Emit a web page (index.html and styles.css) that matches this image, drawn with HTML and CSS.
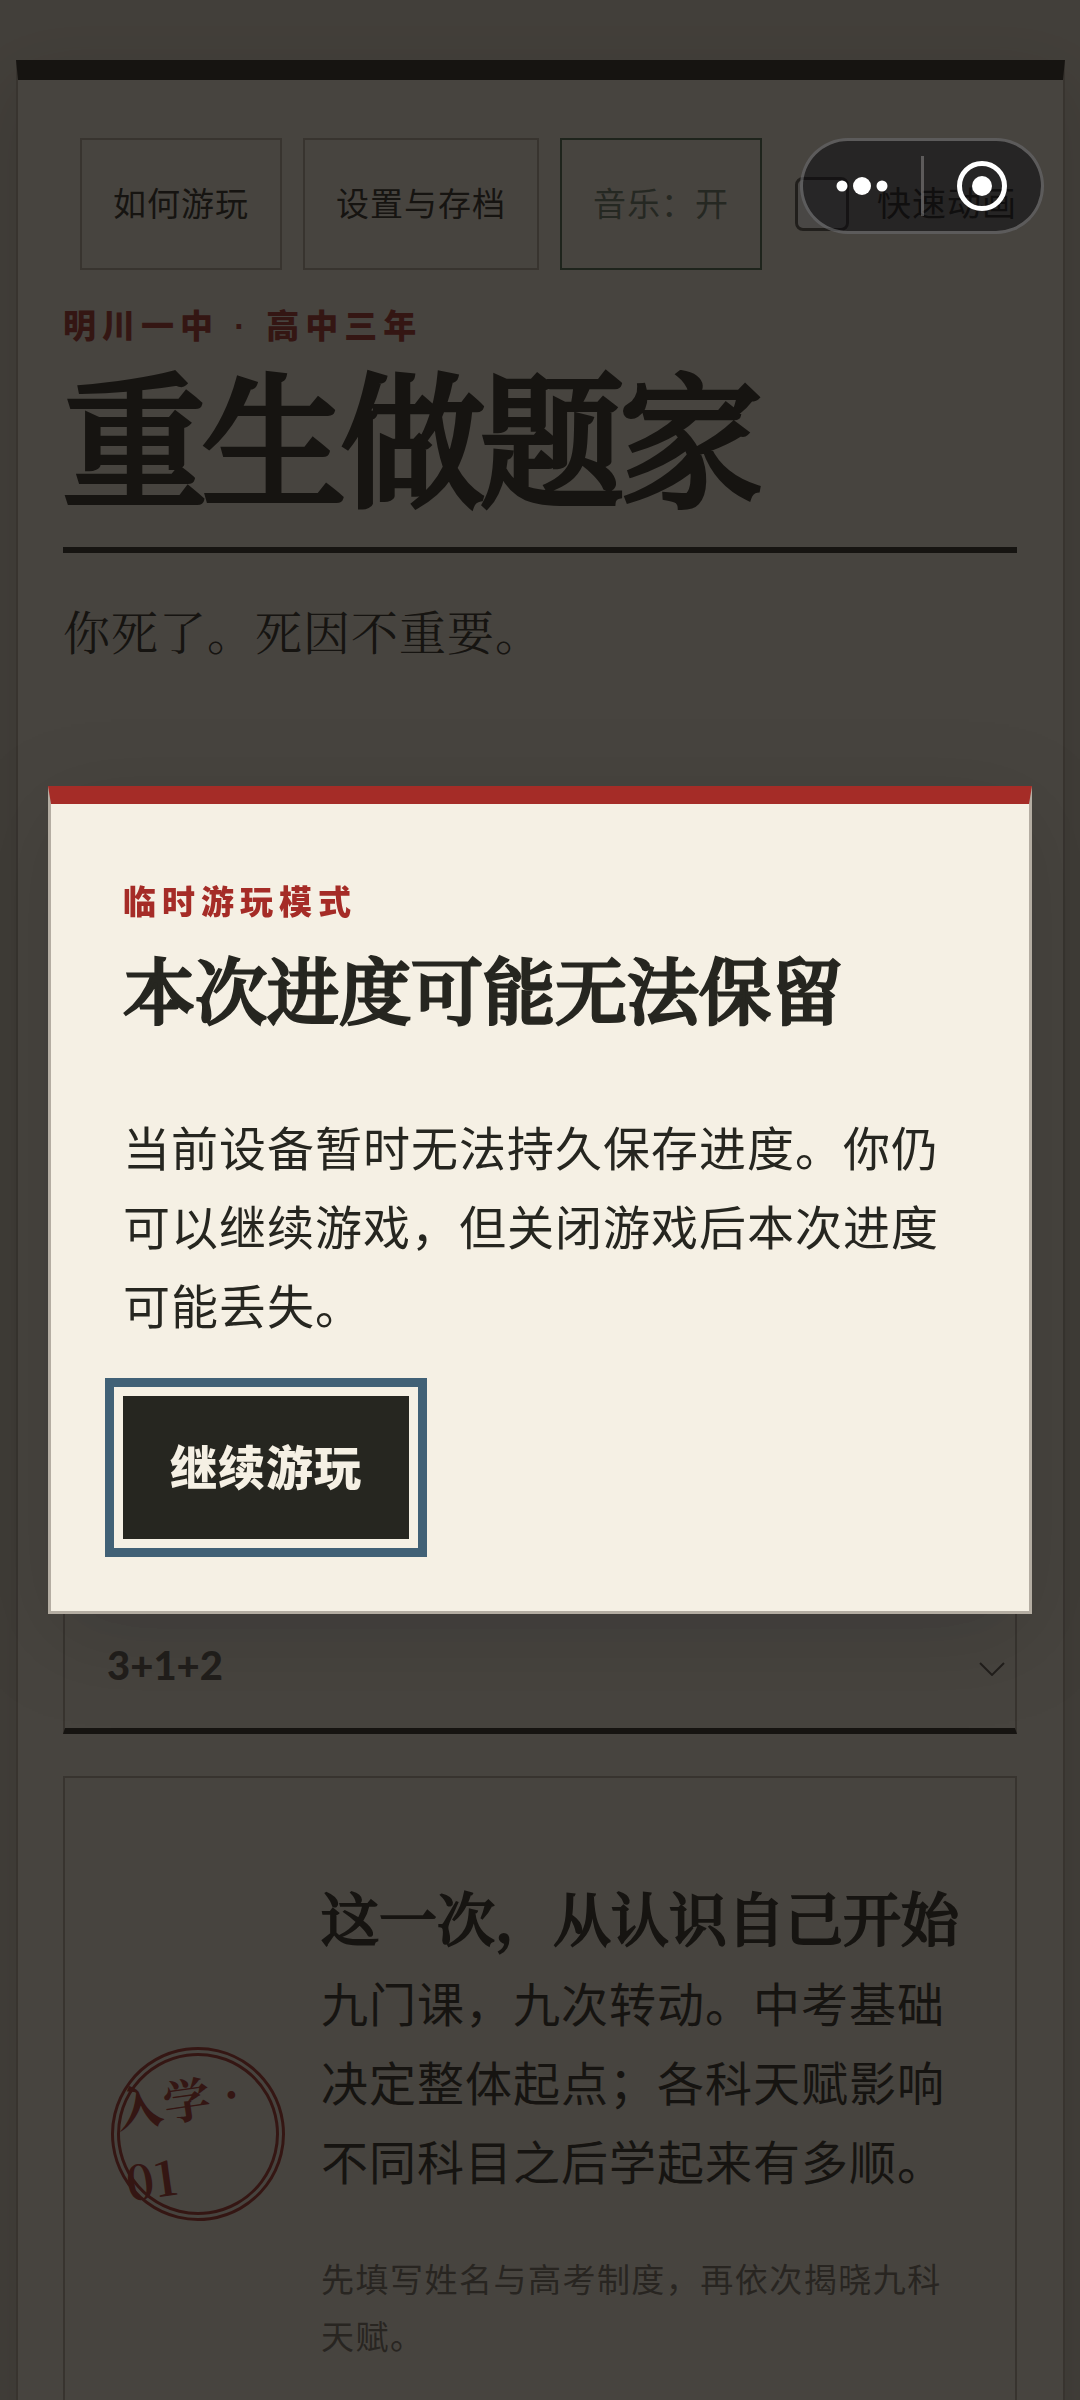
FILE: index.html
```html
<!DOCTYPE html>
<html lang="zh-CN">
<head>
    <meta charset="UTF-8">
    <meta name="viewport" content="width=device-width, initial-scale=1.0">
    <title>重生做题家</title>
    <link rel="stylesheet" href="styles.css">
</head>
<body>
    <main class="paper">
        <div class="toolbar">
            <button class="tool-btn" type="button">如何游玩</button>
            <button class="tool-btn" type="button">设置与存档</button>
            <button class="tool-btn music-on" type="button">音乐：开</button>
            <label class="fast-toggle">
                <input type="checkbox" id="fast">
                <span>快速动画</span>
            </label>
        </div>

        <header class="masthead">
            <p class="eyebrow">明川一中 · 高中三年</p>
            <h1>重生做题家</h1>
        </header>

        <section class="story">
            <p>你死了。死因不重要。</p>
        </section>

        <form class="setup">
            <label class="field">
                <select class="field-input" aria-label="高考制度">
                    <option>3+1+2</option>
                    <option>3+3</option>
                </select>
                <svg class="chevron" viewBox="0 0 26 14" aria-hidden="true"><path d="M1 1l12 12L25 1"/></svg>
            </label>
        </form>

        <section class="card">
            <div class="stamp">入学 · 01</div>
            <div class="card-text">
                <h2>这一次，从认识自己开始</h2>
                <p>九门课，九次转动。中考基础决定整体起点；各科天赋影响不同科目之后学起来有多顺。</p>
                <p class="hint">先填写姓名与高考制度，再依次揭晓九科天赋。</p>
            </div>
        </section>
    </main>

    <div class="overlay">
        <div class="modal" role="dialog" aria-modal="true" aria-labelledby="modalTitle">
            <p class="eyebrow">临时游玩模式</p>
            <h2 id="modalTitle">本次进度可能无法保留</h2>
            <p class="modal-text">当前设备暂时无法持久保存进度。你仍可以继续游戏，但关闭游戏后本次进度可能丢失。</p>
            <button class="primary-btn" type="button">继续游玩</button>
        </div>
    </div>

    <!-- 小程序胶囊 -->
    <div class="capsule">
        <button type="button" aria-label="更多">
            <svg width="52" height="20" viewBox="0 0 52 20"><circle cx="6" cy="10" r="5.5"/><circle cx="26" cy="10" r="9"/><circle cx="46" cy="10" r="5.5"/></svg>
        </button>
        <span class="capsule-line"></span>
        <button type="button" aria-label="关闭">
            <svg width="50" height="50" viewBox="0 0 50 50"><circle cx="25" cy="25" r="22.5" fill="none" stroke="#fff" stroke-width="5"/><circle cx="25" cy="25" r="10"/></svg>
        </button>
    </div>
</body>
</html>
```

FILE: styles.css
```css
:root {
    --ink: #262620;
    --paper: #f5f0e5;
    --red: #a52c27;
    --line: #b4ada2;
    --muted: #716d66;
    --green: #466850;
    --focus: #416176;
    --sans: "Noto Sans CJK SC", sans-serif;
    --serif: "Songti SC", "Noto Serif CJK SC", "Noto Serif SC", "Liberation Serif", "Noto Sans CJK SC", serif;
}

* {
    box-sizing: border-box;
}

body {
    margin: 0;
    height: 100vh;
    overflow: hidden;
    background: #e2dccf;
    color: var(--ink);
    font-family: var(--sans);
    font-size: 47px;
    line-height: 79px;
    letter-spacing: 1px;
}

h1, h2, p {
    margin: 0;
}

/* 宋体没有粗体字重，用描边加粗 */
h1, h2 {
    font-family: var(--serif);
    font-weight: 500;
    -webkit-text-stroke: 2px currentColor;
}

button, select {
    font-family: inherit;
    letter-spacing: inherit;
    color: inherit;
}

.paper {
    margin: 60px 15px 0 16px;
    padding: 58px 46px 72px 45px;
    background: var(--paper);
    border: 2px solid var(--line);
    border-top: 20px solid var(--ink);
    box-shadow: 0 24px 72px rgba(38, 38, 32, 0.2);
}

.toolbar {
    display: flex;
    justify-content: flex-end;
    gap: 21px;
}

.tool-btn {
    height: 132px;
    padding: 0 31px 5px;
    border: 2px solid var(--line);
    background: transparent;
    font-size: 33px;
    white-space: nowrap;
}

.music-on {
    border-color: var(--green);
    color: #66786a;
}

.fast-toggle {
    display: flex;
    align-items: center;
    gap: 28px;
    margin-left: 12px;
    font-size: 34px;
    white-space: nowrap;
}

.fast-toggle span {
    padding-bottom: 5px;
}

.fast-toggle input {
    appearance: none;
    width: 54px;
    height: 54px;
    margin: 0;
    border: 3px solid #55524e;
    border-radius: 8px;
    background: #fff;
}

.eyebrow {
    color: var(--red);
    font-family: "Liberation Sans", var(--sans);
    font-size: 33px;
    font-weight: 800;
    line-height: 57px;
    letter-spacing: 6px;
}

.masthead {
    margin-top: 28px;
    padding-bottom: 36px;
    border-bottom: 6px solid var(--ink);
}

h1 {
    font-size: 144px;
    font-weight: 400;
    line-height: 156px;
    letter-spacing: -5px;
    -webkit-text-stroke-width: 6px;
}

.story {
    min-height: 304px;
    margin-top: 34px;
    font-family: var(--serif);
    line-height: 86px;
}

.setup {
    padding-top: 712px;
}

.field {
    display: flex;
    align-items: center;
    position: relative;
}

.field-input {
    appearance: none;
    width: 100%;
    height: 131px;
    padding: 0 42px 3px;
    border: 2px solid var(--line);
    border-bottom: 6px solid var(--ink);
    border-radius: 0;
    background: transparent;
    font-family: Lato, var(--sans);
    font-size: 40px;
    font-weight: 900;
    letter-spacing: 0;
    color: #55524e;
}

.chevron {
    position: absolute;
    right: 12px;
    width: 26px;
    height: 14px;
    fill: none;
    stroke: #55524e;
    stroke-width: 2;
}

.card {
    display: flex;
    align-items: center;
    gap: 36px;
    margin-top: 42px;
    padding: 102px 46px;
    border: 2px solid var(--line);
}

.card-text {
    flex: 1;
    min-width: 0;
    padding-bottom: 24px;
}

.card h2 {
    margin-bottom: 10px;
    font-size: 58px;
    line-height: 72px;
    letter-spacing: 0;
}

.card .hint {
    margin-top: 51px;
    color: var(--muted);
    font-size: 33px;
    line-height: 57px;
    letter-spacing: 0.045em;
}

.stamp {
    display: grid;
    place-items: center;
    flex: none;
    width: 174px;
    height: 174px;
    border: 9px double var(--red);
    border-radius: 50%;
    color: var(--red);
    font-family: var(--serif);
    font-size: 47px;
    font-weight: 700;
    line-height: 74px;
    transform: rotate(-8deg);
}

.overlay {
    position: fixed;
    inset: 0;
    display: flex;
    align-items: center;
    justify-content: center;
    padding: 48px;
    background: rgba(18, 16, 13, 0.77);
}

.modal {
    width: 100%;
    padding: 70px 72px 72px;
    background: #f5f0e4;
    border: 3px solid var(--line);
    border-top: 18px solid var(--red);
    box-shadow: 0 24px 90px rgba(0, 0, 0, 0.15);
}

.modal h2 {
    margin: 11px 0 74px;
    font-size: 72px;
    line-height: 90px;
    letter-spacing: 0;
    -webkit-text-stroke-width: 3px;
}

.primary-btn {
    display: block;
    height: 143px;
    margin-top: 53px;
    padding: 0 47px 6px;
    border: none;
    background: var(--ink);
    color: #f5f0e4;
    font-size: 47px;
    font-weight: 800;
    outline: 9px solid var(--focus);
    outline-offset: 9px;
}

.capsule {
    position: fixed;
    top: 138px;
    right: 36px;
    display: flex;
    align-items: center;
    width: 244px;
    height: 96px;
    border: 3px solid rgba(255, 255, 255, 0.25);
    border-radius: 48px;
    background: rgba(12, 12, 14, 0.54);
}

.capsule button {
    display: flex;
    flex: 1;
    align-items: center;
    justify-content: center;
    padding: 0;
    border: none;
    background: none;
    fill: #fff;
}

.capsule-line {
    width: 3px;
    height: 60px;
    background: rgba(255, 255, 255, 0.25);
}
```
